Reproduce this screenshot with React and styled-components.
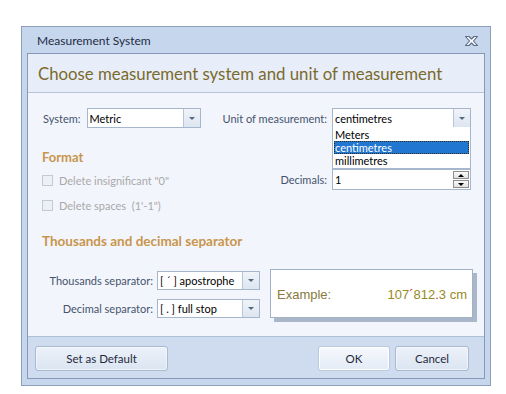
import styled, { createGlobalStyle } from 'styled-components';

const GlobalStyle = createGlobalStyle`
  body {
    margin: 0;
    background: #ffffff;
    font-family: Lato, "Liberation Sans", sans-serif;
  }
`;

const Page = styled.div`
  width: 506px;
  height: 394px;
  padding: 26px 0 0 21px;
  box-sizing: border-box;
`;

const Dialog = styled.div`
  width: 470px;
  height: 360px;
  box-sizing: border-box;
  border: 1px solid #8e9fb9;
  background: #c6d6ec;
  padding: 0 5px 6px;
  display: flex;
  flex-direction: column;
`;

const TitleBar = styled.div`
  height: 26px;
  flex-shrink: 0;
  display: flex;
  align-items: center;
  justify-content: space-between;
  padding: 1px 6px 0 10px;
  box-sizing: border-box;
  font-size: 12px;
  color: #1f2d45;
`;

const Panel = styled.div`
  flex: 1;
  border: 1px solid #8799b6;
  background: #f3f5fc;
  display: flex;
  flex-direction: column;
`;

const Header = styled.div`
  height: 38px;
  flex-shrink: 0;
  border-bottom: 1px solid #b6c5dc;
  background: #e8eef9;
  display: flex;
  align-items: center;
  padding-left: 10px;
  font-size: 16.8px;
  color: #7a6a2c;
`;

const Content = styled.div`
  flex: 1;
  padding: 15px 13px 0 14px;
`;

const Footer = styled.div`
  height: 42px;
  flex-shrink: 0;
  border-top: 1px solid #aebfd8;
  background: #cfdcf0;
  display: flex;
  align-items: center;
  justify-content: space-between;
  padding: 1px 15px 0 7px;
  box-sizing: border-box;
`;

const Row = styled.div`
  display: flex;
  align-items: center;
  justify-content: ${(p) => p.$justify || 'flex-start'};
`;

const Group = styled.div`
  display: flex;
  align-items: center;
  gap: ${(p) => p.$gap || 5}px;
  position: relative;
`;

const Label = styled.span`
  font-size: 11px;
  color: #44546c;
  white-space: nowrap;
  width: ${(p) => (p.$width ? `${p.$width}px` : 'auto')};
  text-align: ${(p) => (p.$right ? 'right' : 'left')};
  margin-left: ${(p) => p.$ml || 0}px;
`;

const Combo = styled.div`
  position: relative;
  width: ${(p) => p.$width}px;
  height: ${(p) => p.$height || 20}px;
  box-sizing: border-box;
  border: 1px solid #a6b6cd;
  background: #ffffff;
  display: flex;
  align-items: stretch;
`;

const ComboText = styled.span`
  flex: 1;
  display: flex;
  align-items: center;
  padding-left: 2px;
  font-size: 11px;
  color: #000000;
  white-space: nowrap;
`;

const ArrowButton = styled.span`
  width: 16px;
  border-left: 1px solid #b8c5d8;
  background: linear-gradient(#f0f4f9, #dde5f0);
  display: flex;
  align-items: center;
  justify-content: center;

  &::after {
    content: '';
    border-left: 3px solid transparent;
    border-right: 3px solid transparent;
    border-top: 3px solid #56677f;
  }
`;

const DropList = styled.div`
  position: absolute;
  left: -1px;
  right: -1px;
  top: 100%;
  border: 1px solid #a6b6cd;
  border-top: none;
  background: #ffffff;
  padding: 1px;
  z-index: 5;
`;

const DropItem = styled.div`
  height: 13px;
  line-height: 13px;
  padding-left: 1px;
  font-size: 11px;
  box-sizing: border-box;
  color: ${(p) => (p.$selected ? '#ffffff' : '#000000')};
  background: ${(p) => (p.$selected ? '#2176d2' : 'transparent')};
  outline: ${(p) => (p.$selected ? '1px dotted #3a2a10' : 'none')};
  outline-offset: -1px;
`;

const SpinButtons = styled.span`
  width: 16px;
  display: flex;
  flex-direction: column;
  justify-content: center;
  gap: 1px;
  padding: 1px 1px 1px 0;
`;

const SpinButton = styled.span`
  flex: 1;
  border: 1px solid #8d8d8d;
  background: linear-gradient(#fafafa, #e2e2e2);
  display: flex;
  align-items: center;
  justify-content: center;

  &::after {
    content: '';
    border-left: 3px solid transparent;
    border-right: 3px solid transparent;
    ${(p) => (p.$up ? 'border-bottom: 3px solid #000;' : 'border-top: 3px solid #000;')}
  }
`;

const MidGrid = styled.div`
  display: grid;
  grid-template-columns: 1fr auto;
  margin-top: 21px;
`;

const Column = styled.div`
  display: flex;
  flex-direction: column;
  gap: ${(p) => p.$gap || 0}px;
  padding-top: ${(p) => p.$pt || 0}px;
`;

const Heading = styled.div`
  height: 16px;
  line-height: 16px;
  font-size: ${(p) => p.$size || 13}px;
  font-weight: 700;
  color: #c8964c;
  margin-top: ${(p) => p.$mt || 0}px;
`;

const CheckRow = styled.div`
  height: 19px;
  display: flex;
  align-items: center;
  gap: 6px;
  font-size: 11px;
  color: #a9a9a9;
  white-space: pre;
`;

const CheckBox = styled.span`
  width: 11px;
  height: 11px;
  box-sizing: border-box;
  border: 1px solid #c4cad4;
  background: #eceff4;
`;

const BottomRow = styled.div`
  display: flex;
  align-items: flex-start;
  margin-top: 20px;
`;

const ExampleBox = styled.div`
  width: 203px;
  height: 49px;
  flex-shrink: 0;
  box-sizing: border-box;
  margin-left: 10px;
  border: 1px solid #a3b1c6;
  background: #ffffff;
  box-shadow: 4px 4px 0 #aab7cb;
  display: flex;
  align-items: center;
  justify-content: space-between;
  padding: 1px 5px 0 6px;
  font-family: "Liberation Sans", Arial, sans-serif;
  font-size: 13px;
`;

const ExampleLabel = styled.span`
  color: #877a3b;
`;

const ExampleValue = styled.span`
  color: #958a1f;
`;

const Mark = styled.span`
  color: #e3241b;
`;

const Button = styled.div`
  width: ${(p) => p.$width}px;
  height: 25px;
  box-sizing: border-box;
  border: 1px solid ${(p) => (p.$default ? '#b9c9de' : '#a9b9ce')};
  border-radius: 3px;
  background: ${(p) =>
    p.$default ? 'linear-gradient(#f6f9fd, #e3ebf6)' : 'linear-gradient(#edf2f9, #dae4f1)'};
  box-shadow: inset 0 0 0 1px ${(p) => (p.$default ? '#ffffff' : 'rgba(255,255,255,0.5)')};
  display: flex;
  align-items: center;
  justify-content: center;
  font-size: 11.5px;
  color: #1e2a3c;
`;

const ButtonGroup = styled.div`
  display: flex;
  gap: 5px;
`;

function CloseIcon() {
  return (
    <svg width="15" height="12" viewBox="0 0 15 12">
      <path
        d="M1.5 1.5 H5 L7.5 4 L10 1.5 H13.5 L9.5 6 L13.5 10.5 H10 L7.5 8 L5 10.5 H1.5 L5.5 6 Z"
        fill="#f6f8fb"
        stroke="#5b6b82"
        strokeWidth="1.1"
        strokeLinejoin="round"
      />
    </svg>
  );
}

function ComboBox({ width, height, value, children }) {
  return (
    <Combo $width={width} $height={height}>
      <ComboText>{value}</ComboText>
      <ArrowButton />
      {children}
    </Combo>
  );
}

export default function App() {
  return (
    <>
      <GlobalStyle />
      <Page>
        <Dialog>
          <TitleBar>
            <span>Measurement System</span>
            <CloseIcon />
          </TitleBar>
          <Panel>
            <Header>Choose measurement system and unit of measurement</Header>
            <Content>
              <Row $justify="space-between">
                <Group $gap={6}>
                  <Label $ml={1}>System:</Label>
                  <ComboBox width={114} value="Metric" />
                </Group>
                <Group>
                  <Label>Unit of measurement:</Label>
                  <ComboBox width={139} value="centimetres">
                    <DropList>
                      <DropItem>Meters</DropItem>
                      <DropItem $selected>centimetres</DropItem>
                      <DropItem>millimetres</DropItem>
                    </DropList>
                  </ComboBox>
                </Group>
              </Row>

              <MidGrid>
                <Column $gap={6}>
                  <Heading>Format</Heading>
                  <CheckRow>
                    <CheckBox />
                    Delete insignificant "0"
                  </CheckRow>
                  <CheckRow>
                    <CheckBox />
                    {"Delete spaces  (1'-1\")"}
                  </CheckRow>
                </Column>
                <Column $pt={20}>
                  <Group>
                    <Label>Decimals:</Label>
                    <Combo $width={139} $height={21}>
                      <ComboText>1</ComboText>
                      <SpinButtons>
                        <SpinButton $up />
                        <SpinButton />
                      </SpinButtons>
                    </Combo>
                  </Group>
                </Column>
              </MidGrid>

              <Heading $mt={18} $size={13.5}>Thousands and decimal separator</Heading>

              <BottomRow>
                <Column $gap={9} $pt={2}>
                  <Group $gap={4}>
                    <Label $width={111} $right>Thousands separator:</Label>
                    <ComboBox width={103} height={19} value="[ ´ ] apostrophe" />
                  </Group>
                  <Group $gap={4}>
                    <Label $width={111} $right>Decimal separator:</Label>
                    <ComboBox width={103} height={19} value="[ . ] full stop" />
                  </Group>
                </Column>
                <ExampleBox>
                  <ExampleLabel>Example:</ExampleLabel>
                  <ExampleValue>
                    107<Mark>´</Mark>812<Mark>.</Mark>3 cm
                  </ExampleValue>
                </ExampleBox>
              </BottomRow>
            </Content>
            <Footer>
              <Button $width={133}>Set as Default</Button>
              <ButtonGroup>
                <Button $width={72} $default>OK</Button>
                <Button $width={74}>Cancel</Button>
              </ButtonGroup>
            </Footer>
          </Panel>
        </Dialog>
      </Page>
    </>
  );
}
